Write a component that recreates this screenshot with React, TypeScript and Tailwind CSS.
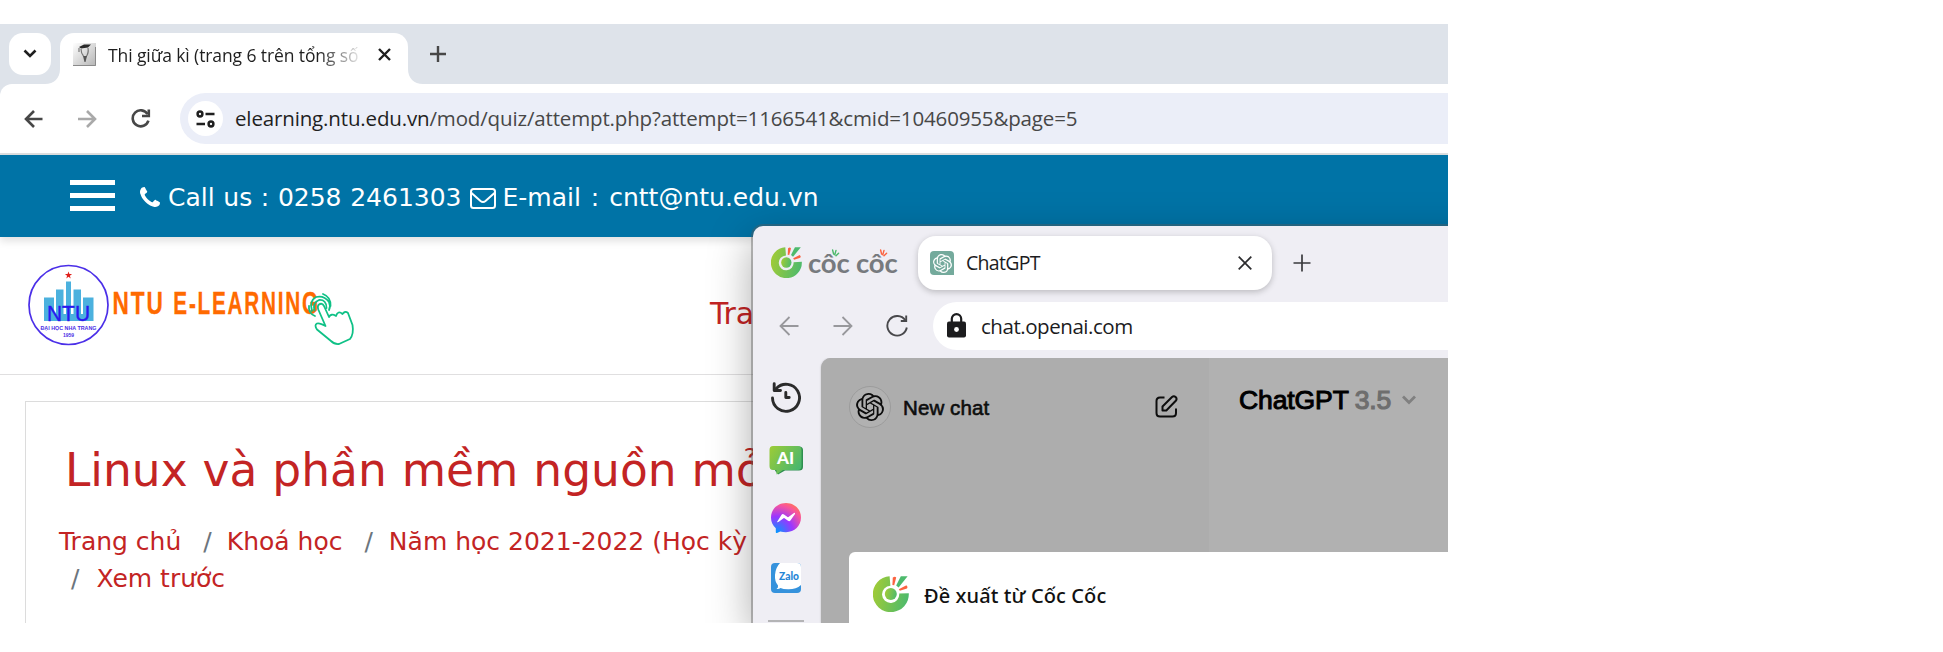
import React from "react";
import { SiOpenai } from "react-icons/si";

const segoe = "font-['Open_Sans','Noto_Sans',sans-serif]";
const verdana = "font-['DejaVu_Sans',sans-serif]";

function CocCocMark({ size, id }: { size: number; id: string }) {
  return (
    <svg width={size} height={size} viewBox="0 0 36 36" className="block shrink-0">
      <defs>
        <linearGradient id={id} x1="0" y1="0.4" x2="1" y2="0.6">
          <stop offset="0" stopColor="#a0cb37" />
          <stop offset="1" stopColor="#4dba6c" />
        </linearGradient>
      </defs>
      <path d="M16.6 0.2 L17.4 9.8 A8.6 8.6 0 1 0 26.2 17.6 L35.8 17.2 A18 18 0 1 1 16.6 0.2Z" fill={`url(#${id})`} />
      <circle cx="17.8" cy="18" r="6" fill={`url(#${id})`} />
      <path d="M27.8 0.3 L34.6 0.3 L25.6 11.4 L23.2 9.4Z" fill="#4dba6c" />
      <path d="M19.8 1.4 Q22.2 -0.2 23.2 1.6 L21.2 9.2 L19.4 9Z" fill="#fb6340" />
      <path d="M33.4 9.2 Q35.4 11 34 12.4 L26.8 14.8 L25.8 13.2Z" fill="#fb6340" />
    </svg>
  );
}

function Rays({ color }: { color: string }) {
  return (
    <svg width="9" height="9" viewBox="0 0 9 9" className="absolute left-[23px] top-[2px]">
      <path d="M1.600 1 L2.600 5 M5 1.400 L3.800 5.800 M7.600 4.200 L5 6.800" stroke={color} strokeWidth="1.400" strokeLinecap="round" />
    </svg>
  );
}

function TabStrip() {
  return (
    <div className="flex h-[60px] shrink-0 bg-[#dee3ea]">
      <div className="ml-[9px] mt-[9px] flex size-[42px] items-center justify-center rounded-[14px] bg-white">
        <svg width="14" height="10" viewBox="0 0 14 10" fill="none"><path d="M1.5 1.5 L7 7 L12.5 1.5" stroke="#1f1f1f" strokeWidth="2.6" /></svg>
      </div>
      <svg width="15" height="15" viewBox="0 0 15 15" className="ml-[-6px] self-end"><path d="M15 0 V15 H0 C9 15 15 9 15 0Z" fill="#fff" /></svg>
      <div className="mt-[9px] flex w-[348px] rounded-t-[14px] bg-white">
        <svg width="23" height="23" viewBox="0 0 23 23" className="ml-[13px] mt-[10px] shrink-0">
          <defs><linearGradient id="fav" x1="0" y1="0" x2="1" y2="1"><stop offset="0" stopColor="#fff" /><stop offset="1" stopColor="#b4b4b4" /></linearGradient></defs>
          <rect width="23" height="23" fill="url(#fav)" />
          <path d="M0 22.5 H22.5 V4" stroke="#8a8a8a" fill="none" />
          <path d="M6 4 L11 1.500 L18 1.500 L15 4.500 L8 5.500Z" fill="#2a2a2a" />
          <path d="M6 5 V9 M8 6 Q8 10 10.500 13 M15 5 Q16 10 13 14" stroke="#777" fill="none" strokeWidth="1.2" />
          <path d="M10 13 L14 13 L12.500 19 H11.500Z" fill="#555" />
        </svg>
        <div className={`${segoe} ml-[12px] mt-[8px] h-[28px] w-[253px] overflow-hidden whitespace-nowrap text-[17.5px] leading-[28px] tracking-[-0.1px] text-[#1f1f1f] [mask-image:linear-gradient(to_right,#000_210px,transparent_256px)]`}>
          Thi giữa kì (trang 6 trên tổng số
        </div>
        <svg width="13" height="13" viewBox="0 0 13 13" className="ml-[16.500px] mt-[15px] shrink-0"><path d="M1 1 L12 12 M12 1 L1 12" stroke="#1f1f1f" strokeWidth="2.4" /></svg>
      </div>
      <svg width="15" height="15" viewBox="0 0 15 15" className="self-end"><path d="M0 0 V15 H15 C6 15 0 9 0 0Z" fill="#fff" /></svg>
      <svg width="16" height="16" viewBox="0 0 16 16" className="ml-[7px] mt-[22px]"><path d="M8 0 V16 M0 8 H16" stroke="#474747" strokeWidth="2.4" /></svg>
    </div>
  );
}

function Toolbar() {
  return (
    <div className="shrink-0 bg-[#dee3ea]">
      <div className="flex h-[69px] items-center rounded-tl-[12px] bg-white">
        <svg width="19" height="18" viewBox="0 0 19 18" fill="none" className="ml-[24px]"><path d="M18.5 9 H2 M10 1 L2 9 L10 17" stroke="#474747" strokeWidth="2.6" /></svg>
        <svg width="19" height="18" viewBox="0 0 19 18" fill="none" className="ml-[35px]"><path d="M0 9 H17 M9 1 L17 9 L9 17" stroke="#a9a9a9" strokeWidth="2.6" /></svg>
        <svg width="20" height="20" viewBox="0 0 20 20" fill="none" className="ml-[34px]"><path d="M16.6 5.2 A8 8 0 1 0 17.4 11.6" stroke="#474747" strokeWidth="2.6" /><path d="M17.8 0.5 V7 H11" stroke="#474747" strokeWidth="2.6" /></svg>
        <div className="ml-[29px] flex h-[51px] flex-1 items-center rounded-l-full bg-[#ebeef8]">
          <div className="ml-[8px] flex size-[35px] items-center justify-center rounded-full bg-white">
            <svg width="19" height="18" viewBox="0 0 19 18" fill="none" stroke="#1f1f1f" strokeWidth="2.5"><circle cx="4" cy="4" r="2.4" /><path d="M9.5 4 H18.5 M0.5 14 H9" /><circle cx="15" cy="14" r="2.4" /></svg>
          </div>
          <div className={`${segoe} mb-[2px] ml-[12px] whitespace-nowrap text-[20.5px] leading-[28px] tracking-[-0.15px] text-[#474747]`}><span className="text-[#1f1f1f]">elearning.ntu.edu.vn</span>/mod/quiz/attempt.php?attempt=1166541&amp;cmid=10460955&amp;page=5</div>
        </div>
      </div>
      <div className="h-[2px] bg-[#dddfe0]" />
    </div>
  );
}

function SiteHeader() {
  return (
    <div className={`${verdana} relative flex h-[82px] shrink-0 items-center bg-[#0073a6] text-[25px] text-white shadow-[0_4px_8px_rgba(0,0,0,0.12)]`}>
      <div className="mb-[1px] ml-[70px] flex h-[31px] w-[45px] flex-col justify-between">
        <div className="h-[5px] bg-white" /><div className="h-[5px] bg-white" /><div className="h-[5px] bg-white" />
      </div>
      <svg width="20" height="20" viewBox="0 0 1408 1408" className="ml-[25px] mt-[2px]" fill="#fff"><path d="M1408 1112q0 27-10 70.5t-21 68.5q-21 50-122 106-94 51-186 51-27 0-53-3.500t-57-12.500-47-14.500-55.500-20.500-49.500-18q-98-35-175-83-127-79-264-216t-216-264q-48-77-83-175-3-9-18-49.500t-20.500-55.500-14.500-47-12.500-57-3.500-53q0-92 51-186 56-101 106-122 25-11 68.500-21t70.500-10q14 0 21 3 18 6 53 76 11 19 30 54t35 63.500 31 53.500q3 4 17.500 25t21.500 35.500 7 28.500q0 20-28.500 50t-62 55-62 53-28.500 46q0 9 5 22.500t8.500 20.500 14 24 11.500 19q76 137 174 235t235 174q2 1 19 11.500t24 14 20.500 8.500 22.500 5q18 0 46-28.500t53-62 55-62 50-28.500q14 0 28.500 7t35.500 21.500 25 17.500q25 15 53.500 31t63.500 35 54 30q70 35 76 53 3 7 3 21z" /></svg>
      <span className="ml-[8px] mt-[4px] whitespace-nowrap [word-spacing:0.700px]">Call us : 0258 2461303</span>
      <svg width="26" height="21" viewBox="0 0 26 21" fill="none" stroke="#fff" strokeWidth="2" className="ml-[8px] mt-[4px]"><rect x="1" y="1" width="24" height="19" rx="2.5" /><path d="M1.500 5 L10.500 13 Q13 15 15.500 13 L24.500 5" /></svg>
      <span className="ml-[7px] mt-[4px] whitespace-nowrap [word-spacing:2px]">E-mail : cntt@ntu.edu.vn</span>
    </div>
  );
}

function SiteLogo() {
  return (
    <svg width="340" height="84" viewBox="0 0 340 84" className="ml-[27px] shrink-0">
      <circle cx="41.500" cy="41" r="39.500" fill="#fff" stroke="#4b2fe8" strokeWidth="1.700" />
      <path d="M41.500 7.500 l0.900 2.600 h2.700 l-2.200 1.600 0.800 2.700 -2.200-1.600 -2.200 1.600 0.800-2.700 -2.200-1.600 h2.700z" fill="#e0201b" />
      <path d="M17 33.500 H27 V57 H17Z M29 25.500 H36.500 V57 H29Z M39 17.500 H44 V57 H39Z M46.500 25.500 H54 V57 H46.500Z M56 33.500 H66.500 V57 H56Z M17 50 H66 V57 H17Z" fill="#4bb1de" />
      <text x="41.500" y="56.500" textAnchor="middle" fontFamily="Liberation Sans" fontSize="22.500" textLength="43" lengthAdjust="spacingAndGlyphs" fill="#2a18f0" stroke="#2a18f0" strokeWidth="0.400">NTU</text>
      <text x="41.500" y="65.500" textAnchor="middle" fontFamily="Liberation Sans" fontWeight="700" fontSize="5.800" textLength="56" lengthAdjust="spacingAndGlyphs" fill="#4a2fe6">ĐẠI HỌC NHA TRANG</text>
      <text x="41.500" y="72.500" textAnchor="middle" fontFamily="Liberation Sans" fontWeight="700" fontSize="5" fill="#4a2fe6">1959</text>
      <g fontFamily="Liberation Sans" fontWeight="700" fontSize="31" fill="#ff6a00" stroke="#ff6a00" strokeWidth="0.300">
        <text transform="translate(85.500 50.200) scale(0.730 1)" letterSpacing="2.600">NTU</text>
        <text transform="translate(146.300 50.200) scale(0.670 1)" letterSpacing="2.600">E-LEARNING</text>
      </g>
      <g fill="none" stroke="#0fc186" strokeWidth="1.800" strokeLinejoin="round" strokeLinecap="round">
        <path d="M302 53 L297 42 Q295 38.500 292 40.500 Q290 42 291.500 46 L298.500 62 Q292.500 58.500 290 59.500 Q287 61 290 65.500 L304 77 Q307.500 80.500 312 80 L323 75 Q327 70 325.500 61 L321 49 Q318 46.500 315.500 50 Q311 46 309 52 Q304 49 302 53" />
        <path d="M287.500 46.500 Q285.500 38.500 292 36 Q299.500 35.500 299.500 44 M288 52 Q281 49 282 42 M285 47 Q282 37 289 33 Q297 31 302 38 Q304 42 302 46 M296 30 Q304 33 303.500 42" />
      </g>
    </svg>
  );
}

function SitePage() {
  return (
    <div className={`${verdana} flex flex-1 flex-col bg-white text-[#c32424]`}>
      <div className="flex h-[138px] shrink-0 border-b border-[#e0dfe0] pt-[27px]">
        <SiteLogo />
        <div className="ml-[343px] mt-[30px] whitespace-nowrap text-[30px] leading-[40px] tracking-[-0.300px]">Tra</div>
      </div>
      <div className="ml-[25px] mt-[26px] flex-1 border-l border-t border-[#dcdcdc]">
        <div className="ml-[39px] mt-[35px] whitespace-nowrap text-[45.500px] leading-[68px] [word-spacing:0.500px]">Linux và phần mềm nguồn mở</div>
        <div className="ml-[33px] mt-[18px] whitespace-pre text-[25px] leading-[37px]">
          <div className="flex"><span>Trang chủ</span><span className="ml-[22px] mr-[15px] text-[#6c757d]">/</span><span>Khoá học</span><span className="ml-[22px] mr-[16px] text-[#6c757d]">/</span><span>Năm học 2021-2022 (Học kỳ</span></div>
          <div className="flex"><span className="ml-[12px] mr-[17px] text-[#6c757d]">/</span><span>Xem trước</span></div>
        </div>
      </div>
    </div>
  );
}

function CocCocTabs() {
  return (
    <div className="flex h-[76px] shrink-0 pt-[10px]">
      <div className="ml-[18px] mt-[11px]"><CocCocMark size={31} id="mk1" /></div>
      <div className="ml-[6px] mt-[11px] flex gap-[7px] font-['Lato',sans-serif] text-[27.500px] font-bold leading-[32px] tracking-[-0.200px] text-[#777a7e]">
        <div className="relative w-[41px] whitespace-nowrap">côc<Rays color="#4dba6c" /></div>
        <div className="relative w-[41px] whitespace-nowrap">côc<Rays color="#fb6340" /></div>
      </div>
      <div className="ml-[21px] flex h-[54px] w-[354px] items-center rounded-[18px] bg-white shadow-[0_2px_6px_rgba(0,0,0,0.22)]">
        <div className="ml-[12px] flex size-[24px] items-center justify-center rounded-[4px] rounded-br-none bg-[#74aa9c] text-[19px] text-white"><SiOpenai /></div>
        <span className={`${segoe} mb-[1px] ml-[12px] text-[19.500px] tracking-[-0.700px] text-[#1c1c1e]`}>ChatGPT</span>
        <svg width="14" height="14" viewBox="0 0 14 14" className="ml-auto mr-[20px]"><path d="M0.700 0.700 L13.300 13.300 M13.300 0.700 L0.700 13.300" stroke="#2c2c2e" strokeWidth="1.700" /></svg>
      </div>
      <svg width="18" height="18" viewBox="0 0 18 18" className="ml-[21px] mt-[18px]"><path d="M9 0.500 V17.500 M0.500 9 H17.500" stroke="#3a3a3d" strokeWidth="1.700" /></svg>
    </div>
  );
}

function CocCocToolbar() {
  return (
    <div className="flex h-[56px] shrink-0">
      <svg width="20" height="20" viewBox="0 0 20 20" fill="none" stroke="#98989c" strokeWidth="1.800" className="ml-[26px] mt-[14px]"><path d="M19.500 10 H1.500 M10.500 1 L1.500 10 L10.500 19" /></svg>
      <svg width="20" height="20" viewBox="0 0 20 20" fill="none" stroke="#98989c" strokeWidth="1.800" className="ml-[34px] mt-[14px]"><path d="M0.500 10 H18.500 M9.500 1 L18.500 10 L9.500 19" /></svg>
      <svg width="22" height="22" viewBox="0 0 22 22" fill="none" stroke="#48484b" strokeWidth="1.900" className="ml-[33px] mt-[13px]"><path d="M19.300 5.300 A9.800 9.800 0 1 0 20.800 12.500" /><path d="M20.200 0.500 V6 H14.800" /></svg>
      <div className="ml-[25px] flex h-[48px] flex-1 items-center rounded-l-full bg-white">
        <svg width="19" height="25" viewBox="0 0 19 25" className="mb-[2px] ml-[14px]"><rect y="8.500" width="19" height="16" rx="2" fill="#1c1c1e" /><path d="M4.800 9 V5.800 A4.700 4.700 0 0 1 14.200 5.800 V9" fill="none" stroke="#1c1c1e" strokeWidth="2.200" /><circle cx="9.500" cy="16.500" r="2.400" fill="#fff" /></svg>
        <span className={`${segoe} ml-[15px] text-[20.500px] tracking-[-0.450px] text-[#1c1c1e]`}>chat.openai.com</span>
      </div>
    </div>
  );
}

function SideRail() {
  return (
    <div className="flex w-[68px] shrink-0 flex-col items-center pr-[2px]">
      <svg width="30" height="31" viewBox="0 0 30 31" fill="none" stroke="#2b2b2b" strokeWidth="2.900" strokeLinecap="round" strokeLinejoin="round" className="mt-[24px]"><path d="M1.500 16 A13.500 13.500 0 1 0 5.500 6.200 L3.500 8.300" /><path d="M3.200 1.800 V8.500 H9.500" /><path d="M14.800 10.500 V15.500 H18.200" /></svg>
      <svg width="34" height="29" viewBox="0 0 34 29" className="mt-[33px]">
        <defs><linearGradient id="ai" x1="0" y1="0" x2="1" y2="0.600"><stop offset="0" stopColor="#9ecc36" /><stop offset="1" stopColor="#4bb76c" /></linearGradient></defs>
        <path d="M6 0.500 H31 Q34 1 34 4 V21 Q34 24.500 30 24.500 H16 L9 28.500 L6 24.500Z" fill="#2f8f50" />
        <path d="M4 0 H28.500 Q32.500 0 32.500 4 V20 Q32.500 24 28.500 24 H14 L7.500 28.500 V24 H4 Q0.500 24 0.500 20 V4 Q0.500 0 4 0Z" fill="url(#ai)" />
        <text x="16.500" y="17.500" textAnchor="middle" fontFamily="Lato" fontWeight="900" fontSize="17" fill="#fff">AI</text>
      </svg>
      <svg width="30" height="30" viewBox="0 0 30 30" className="mt-[28px]">
        <defs><radialGradient id="msg" cx="0.190" cy="0.990" r="1.090"><stop offset="0" stopColor="#0099ff" /><stop offset="0.500" stopColor="#9b36ff" /><stop offset="0.850" stopColor="#f8569b" /><stop offset="1" stopColor="#ff7061" /></radialGradient></defs>
        <path d="M15 0 C6.500 0 0 6.200 0 14.600 C0 19 1.800 22.600 4.800 25.200 V29.300 Q5 30.300 6 29.900 L9.300 28.400 Q12 29.200 15 29.200 C23.500 29.200 30 23 30 14.600 C30 6.200 23.500 0 15 0Z" fill="url(#msg)" />
        <path d="M6 18.900 L10.400 11.900 Q11.500 10.400 13 11.400 L16.500 14 Q17 14.300 17.500 14 L22.200 10.400 Q24.500 9 24 10.900 L19.600 17.300 Q18.500 18.800 17 17.800 L13.500 15.200 Q13 14.900 12.500 15.200 L7.800 18.800 Q6.500 19.600 6 18.900Z" fill="#fff" />
      </svg>
      <svg width="30" height="30" viewBox="0 0 30 30" className="mt-[30px]">
        <rect width="30" height="30" rx="4" fill="#3592dc" />
        <path d="M9 0 H26 Q30 0 30 4 V22 Q25 26.500 17 26.300 Q12 26.200 9.500 25 Q8 26.300 5.500 26 Q7.500 24.500 7 22.500 Q3.500 18.500 4 12 Q4.500 4.500 9 0Z" fill="#fff" />
        <text x="18" y="16.500" textAnchor="middle" fontFamily="Lato" fontWeight="900" fontSize="10.500" textLength="20" lengthAdjust="spacingAndGlyphs" fill="#2686d6">Zalo</text>
      </svg>
      <div className="mt-[27px] h-[2px] w-[36px] bg-[#b4b4b6]" />
    </div>
  );
}

function ChatContent() {
  return (
    <div className="relative flex flex-1 overflow-hidden rounded-tl-[10px] bg-[#b1b1b1] font-['Liberation_Sans',Arial,sans-serif] shadow-[0_0_2px_rgba(0,0,0,0.250)]">
      <div className="flex h-full w-[388px] bg-[#adadad] text-[#0d0d0d]">
        <div className="ml-[28px] mt-[28px] flex size-[42px] items-center justify-center rounded-full border border-[#9c9c9c] bg-[#b1b1b1] text-[28px]"><SiOpenai /></div>
        <span className="ml-[12px] mt-[36px] h-[28px] whitespace-nowrap text-[20.500px] leading-[28px] tracking-[0.100px] [-webkit-text-stroke:0.600px_#0d0d0d]">New chat</span>
        <svg width="23" height="23" viewBox="0 0 23 23" fill="none" stroke="#0d0d0d" strokeWidth="2" className="ml-auto mr-[31px] mt-[37px]"><path d="M9.500 2.500 H5 Q1.500 2.500 1.500 6 V18 Q1.500 21.500 5 21.500 H17.500 Q21 21.500 21 18 V13.500" /><path d="M7.500 15.500 V11.500 L17 2 Q18.800 0.400 20.600 2 Q22.400 3.800 20.800 5.800 L11.300 15.500Z" strokeLinejoin="round" /></svg>
      </div>
      <div className="ml-[30px] mt-[27px] flex h-[32px] items-center text-[26.500px] text-black">
        <span className="tracking-[-0.100px] [-webkit-text-stroke:1px_#000]">ChatGPT</span>
        <span className="ml-[6px] tracking-[-0.200px] text-[#6e6e6e] [-webkit-text-stroke:1.200px_#6e6e6e]">3.5</span>
        <svg width="14" height="10" viewBox="0 0 14 10" fill="none" className="mb-[3px] ml-[11px]"><path d="M1 1.500 L7 7.500 L13 1.500" stroke="#808080" strokeWidth="2.800" /></svg>
      </div>
      <div className="absolute left-[28px] right-0 top-[194px] flex h-[80px] rounded-tl-[6px] bg-white">
        <div className="ml-[24px] mt-[24px]"><CocCocMark size={36} id="mk2" /></div>
        <span className="ml-[15px] mt-[28px] whitespace-nowrap font-['Noto_Sans',sans-serif] text-[20px] font-medium leading-[32px] tracking-[0.100px] text-[#111]">Đề xuất từ Cốc Cốc</span>
      </div>
    </div>
  );
}

export default function App() {
  return (
    <div className="h-[652px] w-full overflow-hidden bg-white pt-[24px]">
      <div className="relative flex h-[599px] w-[1448px] flex-col overflow-hidden">
        <TabStrip />
        <Toolbar />
        <SiteHeader />
        <SitePage />
        <div className="absolute left-[753px] top-[202px] flex h-[397px] w-[760px] flex-col rounded-tl-[10px] bg-[#efeef4] pr-[65px] shadow-[0_0_0_2px_rgba(90,90,90,0.400),0_14px_44px_rgba(0,0,0,0.340)]">
          <CocCocTabs />
          <CocCocToolbar />
          <div className="flex flex-1 overflow-hidden">
            <SideRail />
            <ChatContent />
          </div>
        </div>
      </div>
    </div>
  );
}
